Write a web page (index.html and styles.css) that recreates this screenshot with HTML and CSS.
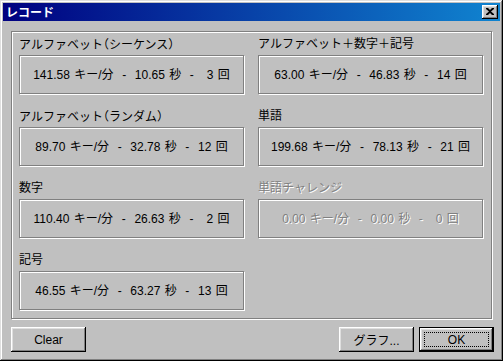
FILE: index.html
```html
<!DOCTYPE html>
<html lang="ja">
<head>
    <meta charset="UTF-8">
    <title>レコード</title>
    <link rel="stylesheet" href="styles.css">
</head>
<body>

<div class="window">
    <div class="titlebar">
        <span class="title">レコード</span>
        <button class="close" type="button">
            <svg width="8" height="7" viewBox="0 0 8 7">
                <path d="M0 0h2l2 2 2-2h2v1L5 3.5 8 6v1H6L4 5 2 7H0V6l3-2.5L0 1z" fill="#000"/>
            </svg>
        </button>
    </div>

    <div class="group">
        <div class="cell">
            <div class="label">アルファベット<span class="paren">（</span>シーケンス<span class="paren">）</span></div>
            <div class="box">141.58 キー/分  -  10.65 秒  -   3 回</div>
        </div>
        <div class="cell">
            <div class="label">アルファベット＋数字＋記号</div>
            <div class="box">63.00 キー/分  -  46.83 秒  -  14 回</div>
        </div>
        <div class="cell">
            <div class="label">アルファベット<span class="paren">（</span>ランダム<span class="paren">）</span></div>
            <div class="box">89.70 キー/分  -  32.78 秒  -  12 回</div>
        </div>
        <div class="cell">
            <div class="label">単語</div>
            <div class="box">199.68 キー/分  -  78.13 秒  -  21 回</div>
        </div>
        <div class="cell">
            <div class="label">数字</div>
            <div class="box">110.40 キー/分  -  26.63 秒  -   2 回</div>
        </div>
        <div class="cell disabled">
            <div class="label">単語チャレンジ</div>
            <div class="box">0.00 キー/分  -  0.00 秒  -   0 回</div>
        </div>
        <div class="cell">
            <div class="label">記号</div>
            <div class="box">46.55 キー/分  -  63.27 秒  -  13 回</div>
        </div>
    </div>

    <div class="buttons">
        <button class="btn" type="button">Clear</button>
        <span class="spacer"></span>
        <button class="btn" type="button">グラフ...</button>
        <button class="btn default" type="button"><span class="focus">OK</span></button>
    </div>
</div>

</body>
</html>
```

FILE: styles.css
```css
html, body {
    margin: 0;
    padding: 0;
    background-color: #c0c0c0;
}
body {
    font-family: "Liberation Sans", "Noto Sans CJK JP", sans-serif;
    font-size: 12px;
    color: #000;
}

.window {
    width: 503px;
    height: 361px;
    box-sizing: border-box;
    padding: 3px;
    background-color: #c0c0c0;
    box-shadow: inset -1px -1px #000, inset 1px 1px #dfdfdf,
                inset -2px -2px #808080, inset 2px 2px #fff;
}

.titlebar {
    height: 18px;
    display: flex;
    align-items: center;
    padding: 0 2px 0 3px;
    background: linear-gradient(90deg, #000080, #1084d0);
}
.title {
    flex: 1;
    color: #fff;
    font-weight: bold;
    font-family: "Noto Sans CJK JP", sans-serif;
    font-size: 12px;
    line-height: 18px;
}
.close {
    width: 16px;
    height: 14px;
    padding: 0;
    border: none;
    display: flex;
    align-items: center;
    justify-content: center;
    background-color: #c0c0c0;
    box-shadow: inset -1px -1px #000, inset 1px 1px #fff,
                inset -2px -2px #808080, inset 2px 2px #dfdfdf;
}
.close svg {
    display: block;
    margin: 0 1px 1px 0;
}

.group {
    margin: 10px 0 0 8px;
    width: 481px;
    height: 288px;
    box-sizing: border-box;
    border: 1px solid #808080;
    box-shadow: 1px 1px 0 #fff, inset 1px 1px 0 #fff;
    padding: 4px 6px 0 7px;
    display: grid;
    grid-template-columns: 226px 226px;
    column-gap: 13px;
    row-gap: 14px;
    align-content: start;
}

.label {
    height: 19px;
    line-height: 16px;
}
.paren {
    font-family: "Noto Sans CJK JP", sans-serif;
    font-feature-settings: "halt";
}

.box {
    height: 39px;
    box-sizing: border-box;
    border: 1px solid #808080;
    box-shadow: 1px 1px 0 #fff, inset 1px 1px 0 #fff;
    width: 225px;
    display: flex;
    align-items: center;
    justify-content: center;
    padding-bottom: 2px;
    white-space: pre;
    word-spacing: 1px;
}

.disabled .label,
.disabled .box {
    color: #808080;
    text-shadow: 1px 1px 0 #fff;
}

.buttons {
    display: flex;
    margin: 8px 0 0 8px;
    width: 483px;
    gap: 5px;
}
.spacer {
    flex: 1;
}
.btn {
    width: 75px;
    height: 25px;
    padding: 0;
    border: none;
    background-color: #c0c0c0;
    font-family: "Liberation Sans", "Noto Sans CJK JP", sans-serif;
    font-size: 12px;
    color: #000;
    box-shadow: inset -1px -1px #000, inset 1px 1px #fff,
                inset -2px -2px #808080, inset 2px 2px #dfdfdf;
}
.btn.default {
    border: 1px solid #000;
    display: flex;
    align-items: stretch;
    padding: 4px;
}
.focus {
    flex: 1;
    display: flex;
    align-items: center;
    justify-content: center;
    border: 1px dotted #000;
}
```
